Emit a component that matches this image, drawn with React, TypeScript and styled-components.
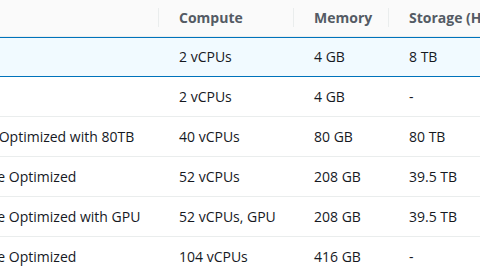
import React from "react";
import styled, {createGlobalStyle} from "styled-components";

const GlobalStyle = createGlobalStyle`
  html, body {
    margin: 0;
    padding: 0;
    background: #ffffff;
    overflow: hidden;
  }
  body {
    font-family: "Open Sans", "Liberation Sans", sans-serif;
    font-size: 14px;
    color: #16191f;
  }
`

interface Instance {
    name: string,
    compute: string,
    memory: string,
    storage: string,
    selected?: boolean
}

const instances: Instance[] = [
    {name: "Snowcone", compute: "2 vCPUs", memory: "4 GB", storage: "8 TB", selected: true},
    {name: "Snowcone SSD", compute: "2 vCPUs", memory: "4 GB", storage: "-"},
    {name: "Snowball Edge Storage Optimized with 80TB", compute: "40 vCPUs", memory: "80 GB", storage: "80 TB"},
    {name: "Snowball Edge Compute Optimized", compute: "52 vCPUs", memory: "208 GB", storage: "39.5 TB"},
    {name: "Snowball Edge Compute Optimized with GPU", compute: "52 vCPUs, GPU", memory: "208 GB", storage: "39.5 TB"},
    {name: "Snowball Edge Compute Optimized", compute: "104 vCPUs", memory: "416 GB", storage: "-"},
]

const columns = ["Name", "Compute", "Memory", "Storage (HDD)"]

export default function App() {
    return (
        <>
            <GlobalStyle/>
            <Viewport>
                <Table>
                    <HeaderRow>
                        {columns.map((col, i) => (
                            <HeaderCell key={col}>
                                {i > 0 && <Divider/>}
                                <HeaderLabel>{col}</HeaderLabel>
                            </HeaderCell>
                        ))}
                    </HeaderRow>
                    {instances.map((row, i) => (
                        <Row key={i} $selected={row.selected}>
                            <NameCell>{row.name}</NameCell>
                            <Cell>{row.compute}</Cell>
                            <Cell>{row.memory}</Cell>
                            <Cell>{row.storage}</Cell>
                        </Row>
                    ))}
                </Table>
            </Viewport>
        </>
    )
}

const Viewport = styled.div`
  width: 480px;
  height: 274px;
  overflow: hidden;
`
// the table is scrolled sideways, so the name column is mostly hidden
const Table = styled.div`
  margin-left: -173px;
  width: 720px;
`
const gridColumns = `331px 135px 95px 1fr`

const HeaderRow = styled.div`
  display: grid;
  grid-template-columns: ${gridColumns};
  height: 37px;
  box-sizing: border-box;
  background: #fafafa;
  border-bottom: 1px solid #eaeded;
`
const HeaderCell = styled.div`
  display: flex;
  align-items: center;
`
const Divider = styled.span`
  width: 1px;
  height: 19px;
  margin-top: -1px;
  background: #eaeded;
`
const HeaderLabel = styled.span`
  padding-left: 20px;
  font-weight: 700;
  color: #545b64;
  white-space: nowrap;
  line-height: 20px;
`
const Row = styled.div<{ $selected?: boolean }>`
  display: grid;
  grid-template-columns: ${gridColumns};
  height: 40px;
  box-sizing: border-box;
  align-items: center;
  background: ${p => p.$selected ? "#f1faff" : "#ffffff"};
  border-top: ${p => p.$selected ? "1px solid #0073bb" : "none"};
  border-bottom: 1px solid ${p => p.$selected ? "#0073bb" : "#eaeded"};
`
const Cell = styled.div`
  padding-left: 21px;
  white-space: nowrap;
  line-height: 20px;
`
const NameCell = styled(Cell)`
  padding-left: 20px;
`
